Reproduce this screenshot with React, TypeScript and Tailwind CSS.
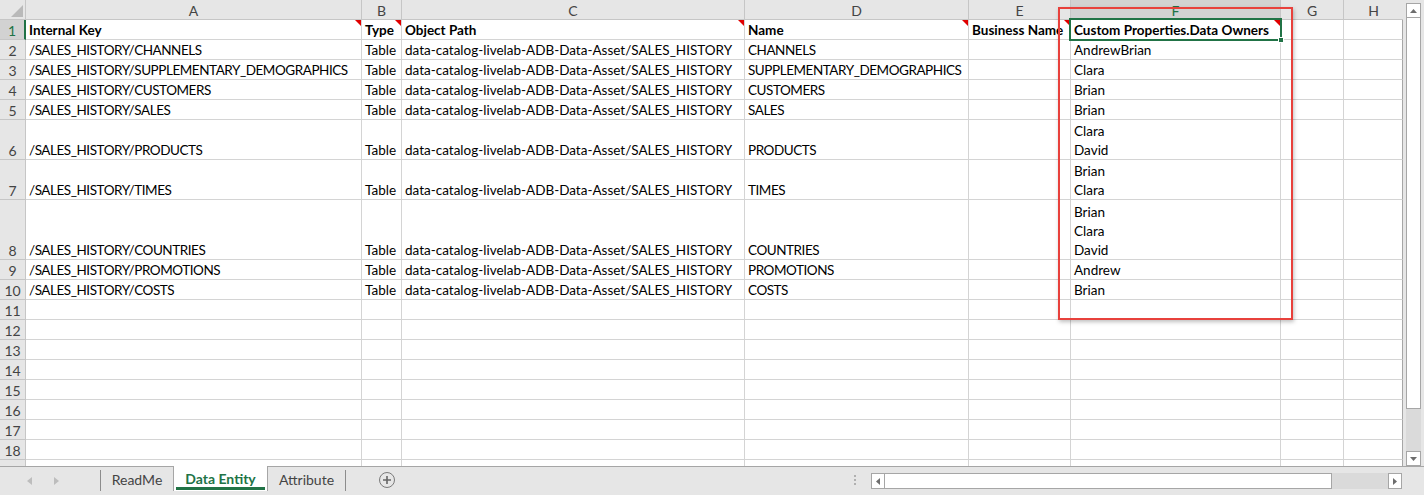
import React from 'react';

type Row = { n: number; h: string; a?: string; b?: string; c?: string; d?: string; e?: string; f?: string[]; header?: boolean };

const rows: Row[] = [
  { n: 1, h: 'h-[20px]', a: 'Internal Key', b: 'Type', c: 'Object Path', d: 'Name', e: 'Business Name', f: ['Custom Properties.Data Owners'], header: true },
  { n: 2, h: 'h-[20px]', a: '/SALES_HISTORY/CHANNELS', b: 'Table', c: 'data-catalog-livelab-ADB-Data-Asset/SALES_HISTORY', d: 'CHANNELS', f: ['AndrewBrian'] },
  { n: 3, h: 'h-[20px]', a: '/SALES_HISTORY/SUPPLEMENTARY_DEMOGRAPHICS', b: 'Table', c: 'data-catalog-livelab-ADB-Data-Asset/SALES_HISTORY', d: 'SUPPLEMENTARY_DEMOGRAPHICS', f: ['Clara'] },
  { n: 4, h: 'h-[20px]', a: '/SALES_HISTORY/CUSTOMERS', b: 'Table', c: 'data-catalog-livelab-ADB-Data-Asset/SALES_HISTORY', d: 'CUSTOMERS', f: ['Brian'] },
  { n: 5, h: 'h-[20px]', a: '/SALES_HISTORY/SALES', b: 'Table', c: 'data-catalog-livelab-ADB-Data-Asset/SALES_HISTORY', d: 'SALES', f: ['Brian'] },
  { n: 6, h: 'h-[40px]', a: '/SALES_HISTORY/PRODUCTS', b: 'Table', c: 'data-catalog-livelab-ADB-Data-Asset/SALES_HISTORY', d: 'PRODUCTS', f: ['Clara', 'David'] },
  { n: 7, h: 'h-[40px]', a: '/SALES_HISTORY/TIMES', b: 'Table', c: 'data-catalog-livelab-ADB-Data-Asset/SALES_HISTORY', d: 'TIMES', f: ['Brian', 'Clara'] },
  { n: 8, h: 'h-[60px]', a: '/SALES_HISTORY/COUNTRIES', b: 'Table', c: 'data-catalog-livelab-ADB-Data-Asset/SALES_HISTORY', d: 'COUNTRIES', f: ['Brian', 'Clara', 'David'] },
  { n: 9, h: 'h-[20px]', a: '/SALES_HISTORY/PROMOTIONS', b: 'Table', c: 'data-catalog-livelab-ADB-Data-Asset/SALES_HISTORY', d: 'PROMOTIONS', f: ['Andrew'] },
  { n: 10, h: 'h-[20px]', a: '/SALES_HISTORY/COSTS', b: 'Table', c: 'data-catalog-livelab-ADB-Data-Asset/SALES_HISTORY', d: 'COSTS', f: ['Brian'] },
  { n: 11, h: 'h-[20px]' },
  { n: 12, h: 'h-[20px]' },
  { n: 13, h: 'h-[20px]' },
  { n: 14, h: 'h-[20px]' },
  { n: 15, h: 'h-[20px]' },
  { n: 16, h: 'h-[20px]' },
  { n: 17, h: 'h-[20px]' },
  { n: 18, h: 'h-[20px]' },
  { n: 19, h: 'h-[20px]' },
];

const Tri = () => (
  <div className="absolute top-0 right-0 w-0 h-0 border-l-[6px] border-l-transparent border-t-[6px] border-t-[#e00000]" />
);

function Cell({ h, lines, bold, comment, last, caps }: { h: string; lines?: string[]; bold?: boolean; comment?: boolean; last?: boolean; caps?: boolean }) {
  return (
    <div
      className={`relative ${h} flex flex-col justify-end overflow-hidden whitespace-nowrap border-b border-r border-b-[#d4d4d4] ${last ? 'border-r-[#a6a6a6]' : 'border-r-[#d4d4d4]'} bg-white pl-[3px] text-black ${bold ? 'font-bold' : caps ? 'tracking-[-0.45px]' : ''}`}
    >
      {(lines || []).map((l, i) => (
        <div key={i} className="h-[19px] shrink-0 pt-[2px] leading-[17px]">
          {l}
        </div>
      ))}
      {comment && <Tri />}
    </div>
  );
}

const colLetters = ['A', 'B', 'C', 'D', 'E', 'F', 'G', 'H'];

export default function App() {
  return (
    <div className="w-[1424px] h-[495px] flex flex-col overflow-hidden bg-[#e6e6e6] [font-family:Lato,'Noto_Sans',sans-serif] text-[13.5px]">
      <div className="flex h-[467px] border-b border-[#a6a6a6] overflow-hidden">
        <div className="relative w-[1403px] h-full overflow-hidden">
          <div className="grid grid-cols-[26px_336px_40px_343px_224px_102px_210px_63px_59px]">
            {/* header row */}
            <div className="h-[20px] border-r border-b border-[#c6c6c6] bg-[#e6e6e6] flex items-end justify-end pr-[2px] pb-[2px]">
              <svg width="12" height="12" viewBox="0 0 12 12">
                <polygon points="0,12 12,12 12,0" fill="#b9b9b9" />
              </svg>
            </div>
            {colLetters.map((c) => (
              <div
                key={c}
                className={`h-[20px] flex items-center justify-center pt-[1px] border-b text-[14px] ${c === 'H' ? '' : 'border-r'} ${
                  c === 'F' ? 'bg-[#d2d2d2] text-[#217346] border-b-[#217346] border-r-[#c6c6c6]' : 'bg-[#e6e6e6] text-[#444] border-[#c6c6c6]'
                }`}
              >
                {c}
              </div>
            ))}
            {rows.map((r) => (
              <React.Fragment key={r.n}>
                <div
                  className={`${r.h} flex items-end justify-center text-[14px] border-b border-b-[#c6c6c6] ${
                    r.n === 1 ? 'bg-[#d2d2d2] text-[#217346] border-r-2 border-r-[#217346]' : 'bg-[#e6e6e6] text-[#444] border-r border-r-[#c6c6c6]'
                  }`}
                >
                  <span className="h-[19px] pt-[2px] leading-[17px]">{r.n}</span>
                </div>
                <Cell h={r.h} lines={r.a ? [r.a] : []} bold={r.header} comment={r.header} caps />
                <Cell h={r.h} lines={r.b ? [r.b] : []} bold={r.header} comment={r.header} />
                <Cell h={r.h} lines={r.c ? [r.c] : []} bold={r.header} comment={r.header} />
                <Cell h={r.h} lines={r.d ? [r.d] : []} bold={r.header} comment={r.header} caps />
                <Cell h={r.h} lines={r.e ? [r.e] : []} bold={r.header} comment={r.header} />
                <div className={`relative ${r.header ? 'overflow-visible z-10' : ''}`}>
                  <Cell h={r.h} lines={r.f || []} bold={r.header} comment={r.header} />
                  {r.header && (
                    <div className="absolute left-[-2px] top-[-2px] right-[-1px] bottom-[-1px] border-2 border-[#217346] pointer-events-none">
                      <div className="absolute right-[-4px] bottom-[-4px] w-[6px] h-[6px] bg-[#217346] border border-white" />
                    </div>
                  )}
                </div>
                <Cell h={r.h} />
                <Cell h={r.h} last />
              </React.Fragment>
            ))}
          </div>
          {/* highlight callout */}
          <div className="absolute left-[1058px] top-[7px] w-[235px] h-[313px] border-2 border-[#e8413c] shadow-[1px_2px_4px_rgba(0,0,0,0.25)] pointer-events-none z-20" />
        </div>
        {/* vertical scrollbar */}
        <div className="w-[21px] h-full flex flex-col pl-[3px] pr-[3px] pt-[3px]">
          <div className="h-[15px] w-[15px] border border-[#a6a6a6] bg-white flex items-center justify-center">
            <svg width="7" height="4" viewBox="0 0 7 4"><polygon points="0,4 7,4 3.5,0" fill="#6d6d6d" /></svg>
          </div>
          <div className="h-[391px] w-[15px] border-x border-b border-[#a6a6a6] bg-white" />
          <div className="flex-1 w-[15px] bg-[#dadada]" />
          <div className="h-[15px] w-[15px] border border-[#a6a6a6] bg-white flex items-center justify-center">
            <svg width="7" height="4" viewBox="0 0 7 4"><polygon points="0,0 7,0 3.5,4" fill="#6d6d6d" /></svg>
          </div>
        </div>
      </div>
      {/* bottom strip */}
      <div className="flex-1 flex items-start text-[14px]">
        <div className="w-[100px] h-full flex items-center pl-[27px] gap-[22px]">
          <svg width="5" height="8" viewBox="0 0 5 8"><polygon points="5,0 5,8 0,4" fill="#bdbdbd" /></svg>
          <svg width="5" height="8" viewBox="0 0 5 8"><polygon points="0,0 0,8 5,4" fill="#bdbdbd" /></svg>
        </div>
        <div className="w-px h-[21px] mt-[3px] bg-[#8c8c8c]" />
        <div className="w-[72px] h-[24px] flex items-center justify-center text-[#444]">ReadMe</div>
        <div className="w-[95px] h-[25px] -mt-px flex items-center justify-center bg-white border-x border-[#a6a6a6] font-bold text-[#217346] relative">
          Data Entity
          <div className="absolute left-[2px] right-[2px] bottom-[1px] h-[3px] bg-[#217346]" />
        </div>
        <div className="w-[77px] h-[24px] flex items-center justify-center text-[#444]">Attribute</div>
        <div className="w-px h-[21px] mt-[3px] bg-[#8c8c8c]" />
        <div className="w-[33px]" />
        <div className="h-[26px] flex items-center">
          <div className="w-[16px] h-[16px] rounded-full border border-[#7a7a7a] flex items-center justify-center">
            <svg width="8" height="8" viewBox="0 0 8 8"><path d="M4 0v8M0 4h8" stroke="#666" strokeWidth="1.6" /></svg>
          </div>
        </div>
        <div className="flex-1" />
        <div className="h-[26px] flex flex-col justify-center gap-[2px] mr-[15px]">
          <div className="w-[2px] h-[2px] bg-[#b0b0b0]" />
          <div className="w-[2px] h-[2px] bg-[#b0b0b0]" />
          <div className="w-[2px] h-[2px] bg-[#b0b0b0]" />
        </div>
        <div className="w-[531px] h-[16px] mt-[6px] flex">
          <div className="w-[14px] h-full border border-[#a6a6a6] bg-white flex items-center justify-center">
            <svg width="4" height="7" viewBox="0 0 4 7"><polygon points="4,0 4,7 0,3.5" fill="#6d6d6d" /></svg>
          </div>
          <div className="w-[447px] h-full border-y border-r border-[#a6a6a6] bg-white" />
          <div className="flex-1 h-full bg-[#dadada]" />
          <div className="w-[14px] h-full border border-[#a6a6a6] bg-white flex items-center justify-center">
            <svg width="4" height="7" viewBox="0 0 4 7"><polygon points="0,0 0,7 4,3.5" fill="#6d6d6d" /></svg>
          </div>
        </div>
        <div className="w-[22px]" />
      </div>
    </div>
  );
}
